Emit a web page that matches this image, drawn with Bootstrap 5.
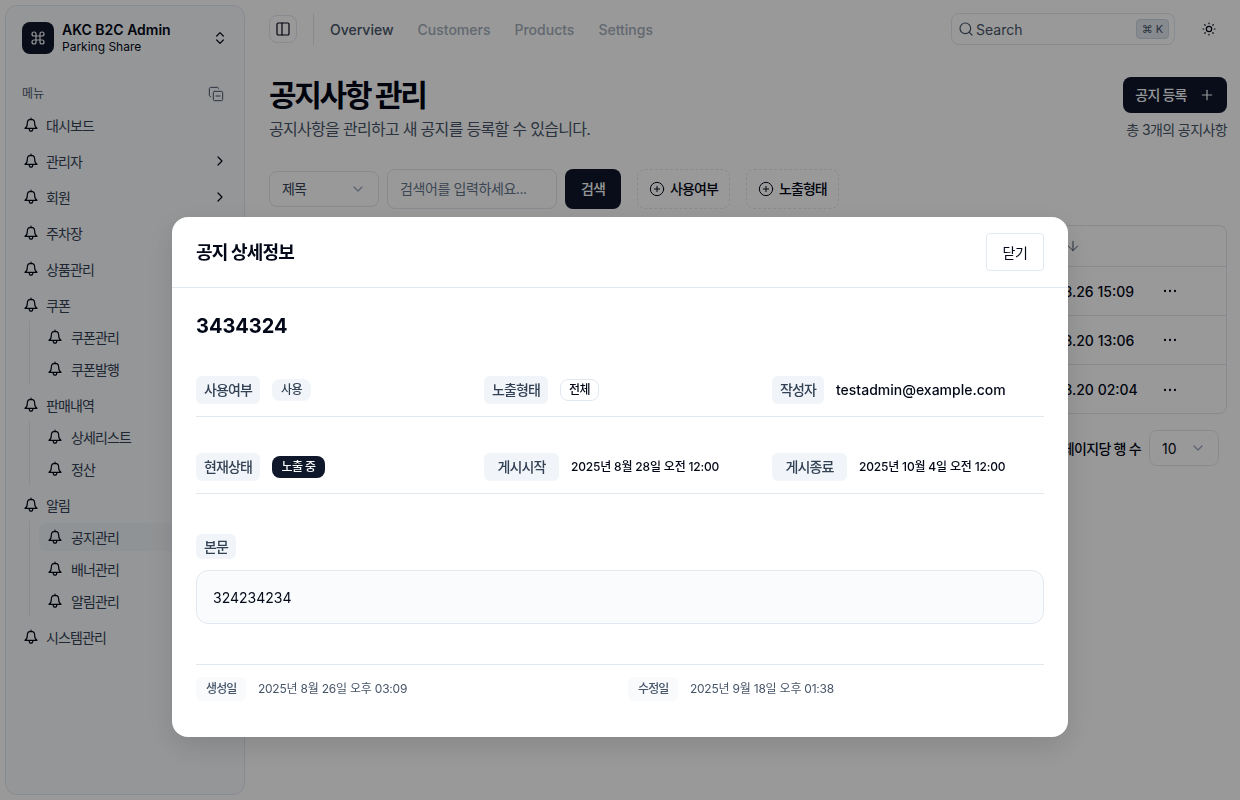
<!doctype html>
<html lang="ko">
<head>
<meta charset="utf-8">
<title>공지사항 관리</title>
<link href="https://cdn.jsdelivr.net/npm/bootstrap@5.3.0/dist/css/bootstrap.min.css" rel="stylesheet">
<style>
body{font-family:Inter,"Noto Sans CJK KR",sans-serif;font-size:14px;color:#020817;background:#fff;height:800px;overflow:hidden}
.ico{width:16px;height:16px;fill:none;stroke:currentColor;stroke-width:1.8;stroke-linecap:round;stroke-linejoin:round;flex:none}
.ico.thin{stroke-width:1.5}
.ico.faint{color:#94a3b8}
.up1{margin-bottom:2px}
.side{width:240px;height:790px;margin:5px 0 5px 5px;background:#f8fafc;border:1px solid #e2e8f0;border-radius:12px;padding:16px;flex:none}
.logo{width:32px;height:32px;border-radius:8px;background:#0f172a;color:#f8fafc}
.org{height:32px;line-height:16px}
.org b{font-size:14px;font-weight:600}
.org span{font-size:12px;margin-top:1px}
.seclabel{height:31px;margin-top:24px;font-size:12px;color:#475569;margin-right:4px}
.menu-a,.menu-s{display:flex;align-items:center;color:#334155;text-decoration:none;letter-spacing:-.9px}
.menu-a .ico,.menu-s .ico{color:#020817}
.menu-a{height:32px;gap:7px;margin-top:4px;margin-left:1px}
.menu-a:first-child{margin-top:0}
.subl{margin:0 0 0 7px;border-left:1px solid #e2e8f0;padding:2px 0 2px 9px;display:flex;flex-direction:column;gap:4px}
.menu-s{height:28px;gap:8px;padding-left:8px;border-radius:6px}
.menu-s.on{background:#f1f5f9}
.mainp{flex:1;min-width:0;padding:0 13px 0 24px}
.topb{height:58px}
.tog{width:28px;height:28px;border:1px solid #e2e8f0;border-radius:8px;color:#020817}
.vr1{width:1px;height:32px;background:#e2e8f0;margin:0 16px}
.tlink{color:#a3adba;font-weight:500;text-decoration:none;margin-right:24px}
.tlink.on{color:#475569}
.srch{width:224px;height:32px;border:1px solid #e2e8f0;border-radius:8px;padding:0 5px 0 6px;color:#475569;margin-right:26px;gap:2px}
.kb{font-size:11px;background:#e2e8f0;border:1px solid #cbd5e1;border-radius:4px;width:33px;height:20px;color:#475569}
.sunb{color:#020817;margin-right:10px}
.headr{margin-top:19px}
h1.ttl{font-size:30px;font-weight:700;letter-spacing:-2.3px;line-height:36px;margin:0}
.subt{font-size:16px;color:#475569;line-height:24px;margin-top:4px;letter-spacing:-.7px}
.dkbtn{background:#0f172a;color:#f8fafc;border:0;border-radius:8px;font-size:14px;font-weight:500;height:36px;width:104px;letter-spacing:-.8px}
.dkbtn:hover{background:#0f172a;color:#f8fafc}
.addb{gap:12px}
.cnt{color:#475569;line-height:20px;margin-top:7px;letter-spacing:-.6px}
.filt{margin-top:28px;height:40px}
.fsel{width:110px;height:36px;border:1px solid #e2e8f0;border-radius:8px;padding:0 12px;color:#334155;letter-spacing:-1px}
.finp{width:170px;height:40px;border:1px solid #e2e8f0;border-radius:8px;padding:0 12px;color:#64748b;background:#fff;letter-spacing:-.4px}
.fbtn{width:56px;height:40px}
.dash{height:40px;border:1px dashed #e2e8f0;border-radius:8px;font-weight:500;padding:0 11px;color:#020817;gap:5px;letter-spacing:-.9px}
.tblw{margin-top:16px;border:1px solid #e2e8f0;border-radius:8px;height:189px;overflow:hidden}
.thr{height:41px;border-bottom:1px solid #e2e8f0;padding-left:795px;color:#475569}
.tr1{height:49px;border-bottom:1px solid #e2e8f0;padding-left:746px;font-weight:500}
.tr1:last-child{border-bottom:0}
.tr1 span{width:146px}
.pager{margin-top:16px;padding-right:8px;letter-spacing:-.7px}
.psel{width:70px;height:36px;border:1px solid #e2e8f0;border-radius:8px;padding:0 12px;letter-spacing:0}
.modal-backdrop.show.scrim{background:#000;opacity:.4}
.dlg{position:fixed;left:172px;top:217px;width:896px;z-index:1060}
.dlg .modal-content{background:#fff;border:0;border-radius:16px;height:520px;overflow:hidden;box-shadow:0 10px 30px rgba(0,0,0,.12)}
.dlg .modal-header{height:71px;padding:0 24px;border-bottom:1px solid #e2e8f0}
.dlg .modal-title{font-size:18px;font-weight:600;letter-spacing:-.85px;color:#020817}
.clsb{width:58px;height:38px;border:1px solid #e2e8f0;border-radius:4px;font-size:14px;padding:0;color:#020817;letter-spacing:-.5px}
.dlg .modal-body{padding:24px}
.numt{font-size:20px;font-weight:700;line-height:28px;margin:0 0 36px 0;color:#020817}
.infg{display:grid;grid-template-columns:repeat(3,272px);gap:16px;padding-bottom:12px;border-bottom:1px solid #e2e8f0;margin-bottom:36px}
.lbl{background:#f1f5f9;color:#334155;border-radius:6px;font-weight:500;height:28px;padding:0 8px;line-height:28px;flex:none;letter-spacing:-.9px}
.wd-64{min-width:64px;text-align:center}
.wd-75{min-width:75px;text-align:center}
.pill{font-size:12px;height:22px;line-height:20px;padding:0 8px;border-radius:8px;border:1px solid transparent;font-weight:500;letter-spacing:-.6px}
.pill.sec{background:#f1f5f9;color:#334155}
.pill.out{border-color:#e2e8f0}
.pill.dk{background:#0f172a;color:#f8fafc;padding:0 8.5px}
.val1{font-weight:500;padding-bottom:2px}
.val2{font-size:12px;font-weight:500;letter-spacing:-.18px}
.bonl{height:25px;line-height:25px;padding:0 8px;display:inline-block;margin-top:4px}
.bonb{height:54px;background:#fafbfd;border:1px solid #e2e8f0;border-radius:12px;padding:0 16px;margin-top:11px}
.foot{margin-top:40px;border-top:1px solid #e2e8f0;padding-top:12px;display:grid;grid-template-columns:repeat(2,416px);gap:16px}
.mlb{background:#f8fafc;color:#475569;font-size:12px;font-weight:500;border-radius:6px;height:24px;line-height:24px;padding:0 9.5px 0 10px;letter-spacing:-.9px}
.mv{font-size:12px;color:#475569;letter-spacing:-.22px}
</style>
</head>
<body>
<svg width="0" height="0" class="d-none">
<symbol id="bell" viewBox="0 0 24 24"><path d="M12 1.500v2"/><path d="M12 3.500c-3.300 0-5.500 2.500-5.500 5.800 0 4-.9 6.200-3.500 7.700h18c-2.600-1.500-3.500-3.700-3.500-7.700 0-3.300-2.200-5.800-5.500-5.800z"/><path d="M9.300 17.500c0 2.200 1.100 3.800 2.700 3.800s2.700-1.600 2.700-3.800"/></symbol>
<symbol id="chr" viewBox="0 0 24 24"><path d="m9 18 6-6-6-6"/></symbol>
<symbol id="chd" viewBox="0 0 24 24"><path d="m6 9 6 6 6-6"/></symbol>
<symbol id="cud" viewBox="0 0 24 24"><path d="m7 15 5 5 5-5"/><path d="m7 9 5-5 5 5"/></symbol>
<symbol id="cmd" viewBox="0 0 24 24"><path d="M15 6v12a3 3 0 1 0 3-3H6a3 3 0 1 0 3 3V6a3 3 0 1 0-3 3h12a3 3 0 1 0-3-3"/></symbol>
<symbol id="cpm" viewBox="0 0 24 24"><line x1="12" x2="18" y1="15" y2="15"/><rect width="14" height="14" x="8" y="8" rx="2"/><path d="M4 16c-1.100 0-2-.9-2-2V4c0-1.100.9-2 2-2h10c1.100 0 2 .9 2 2"/></symbol>
<symbol id="pnl" viewBox="0 0 24 24"><rect width="18" height="18" x="3" y="3" rx="2"/><path d="M10.500 3v18"/></symbol>
<symbol id="sch" viewBox="0 0 24 24"><circle cx="11" cy="11" r="8"/><path d="m21 21-4.300-4.300"/></symbol>
<symbol id="sun" viewBox="0 0 24 24"><circle cx="12" cy="12" r="4"/><path d="M12 3v1M12 20v1M3 12h1M20 12h1M18.364 5.636l-.707.707M6.343 17.657l-.707.707M5.636 5.636l.707.707M17.657 17.657l.707.707"/></symbol>
<symbol id="pls" viewBox="0 0 24 24"><path d="M5 12h14"/><path d="M12 5v14"/></symbol>
<symbol id="cpl" viewBox="0 0 24 24"><circle cx="12" cy="12" r="10"/><path d="M8 12h8"/><path d="M12 8v8"/></symbol>
<symbol id="ard" viewBox="0 0 24 24"><path d="M12 5v14"/><path d="m19 12-7 7-7-7"/></symbol>
<symbol id="ell" viewBox="0 0 24 24"><circle cx="12" cy="12" r=".8"/><circle cx="19.500" cy="12" r=".8"/><circle cx="4.500" cy="12" r=".8"/></symbol>
</svg>

<div class="d-flex">
  <aside class="side">
    <div class="d-flex align-items-center gap-2 org">
      <div class="logo d-flex align-items-center justify-content-center"><svg class="ico"><use href="#cmd"/></svg></div>
      <div class="d-flex flex-column flex-grow-1"><b>AKC B2C Admin</b><span>Parking Share</span></div>
      <svg class="ico"><use href="#cud"/></svg>
    </div>
    <div class="seclabel d-flex align-items-center justify-content-between"><span>메뉴</span><svg class="ico thin"><use href="#cpm"/></svg></div>
    <nav>
      <a class="menu-a" href="#"><svg class="ico"><use href="#bell"/></svg>대시보드</a>
      <a class="menu-a" href="#"><svg class="ico"><use href="#bell"/></svg>관리자<svg class="ico ms-auto"><use href="#chr"/></svg></a>
      <a class="menu-a" href="#"><svg class="ico"><use href="#bell"/></svg>회원<svg class="ico ms-auto"><use href="#chr"/></svg></a>
      <a class="menu-a" href="#"><svg class="ico"><use href="#bell"/></svg>주차장</a>
      <a class="menu-a" href="#"><svg class="ico"><use href="#bell"/></svg>상품관리</a>
      <a class="menu-a" href="#"><svg class="ico"><use href="#bell"/></svg>쿠폰</a>
      <div class="subl"><a class="menu-s" href="#"><svg class="ico"><use href="#bell"/></svg>쿠폰관리</a><a class="menu-s" href="#"><svg class="ico"><use href="#bell"/></svg>쿠폰발행</a></div>
      <a class="menu-a" href="#"><svg class="ico"><use href="#bell"/></svg>판매내역</a>
      <div class="subl"><a class="menu-s" href="#"><svg class="ico"><use href="#bell"/></svg>상세리스트</a><a class="menu-s" href="#"><svg class="ico"><use href="#bell"/></svg>정산</a></div>
      <a class="menu-a" href="#"><svg class="ico"><use href="#bell"/></svg>알림</a>
      <div class="subl"><a class="menu-s on" href="#"><svg class="ico"><use href="#bell"/></svg>공지관리</a><a class="menu-s" href="#"><svg class="ico"><use href="#bell"/></svg>배너관리</a><a class="menu-s" href="#"><svg class="ico"><use href="#bell"/></svg>알림관리</a></div>
      <a class="menu-a" href="#"><svg class="ico"><use href="#bell"/></svg>시스템관리</a>
    </nav>
  </aside>

  <main class="mainp">
    <div class="topb d-flex align-items-center">
      <div class="tog d-flex align-items-center justify-content-center"><svg class="ico"><use href="#pnl"/></svg></div>
      <div class="vr1"></div>
      <a class="tlink on" href="#">Overview</a><a class="tlink" href="#">Customers</a><a class="tlink" href="#">Products</a><a class="tlink" href="#">Settings</a>
      <div class="srch d-flex align-items-center ms-auto"><svg class="ico"><use href="#sch"/></svg><span class="flex-grow-1">Search</span><span class="kb d-flex align-items-center justify-content-center">⌘ K</span></div>
      <svg class="ico sunb"><use href="#sun"/></svg>
    </div>
    <div class="headr d-flex justify-content-between">
      <div><h1 class="ttl">공지사항 관리</h1><div class="subt">공지사항을 관리하고 새 공지를 등록할 수 있습니다.</div></div>
      <div class="d-flex flex-column align-items-end"><button class="btn dkbtn addb d-flex align-items-center justify-content-center p-0"><span class="up1">공지 등록</span><svg class="ico"><use href="#pls"/></svg></button><div class="cnt">총 3개의 공지사항</div></div>
    </div>
    <div class="filt d-flex align-items-center gap-2">
      <div class="fsel d-flex align-items-center justify-content-between"><span class="up1">제목</span><svg class="ico faint"><use href="#chd"/></svg></div>
      <div class="finp d-flex align-items-center"><span class="up1">검색어를 입력하세요...</span></div>
      <button class="btn dkbtn fbtn d-flex align-items-center justify-content-center p-0"><span class="up1">검색</span></button>
      <div class="dash d-flex align-items-center ms-2"><svg class="ico thin"><use href="#cpl"/></svg><span class="up1">사용여부</span></div>
      <div class="dash d-flex align-items-center ms-2"><svg class="ico thin"><use href="#cpl"/></svg><span class="up1">노출형태</span></div>
    </div>
    <div class="tblw">
      <div class="thr d-flex align-items-center"><svg class="ico thin"><use href="#ard"/></svg></div>
      <div class="tr1 d-flex align-items-center"><span>2025.08.26 15:09</span><svg class="ico"><use href="#ell"/></svg></div>
      <div class="tr1 d-flex align-items-center"><span>2025.08.20 13:06</span><svg class="ico"><use href="#ell"/></svg></div>
      <div class="tr1 d-flex align-items-center"><span>2025.08.20 02:04</span><svg class="ico"><use href="#ell"/></svg></div>
    </div>
    <div class="pager d-flex justify-content-end align-items-center gap-2 fw-medium">페이지당 행 수<div class="psel d-flex align-items-center justify-content-between fw-normal">10<svg class="ico faint"><use href="#chd"/></svg></div></div>
  </main>
</div>

<div class="modal-backdrop show scrim"></div>
<div class="dlg">
  <div class="modal-content">
    <div class="modal-header"><h2 class="modal-title">공지 상세정보</h2><button class="btn clsb ms-auto">닫기</button></div>
    <div class="modal-body">
      <h3 class="numt">3434324</h3>
      <div class="infg">
        <div class="d-flex align-items-center gap-2"><span class="lbl wd-64">사용여부</span><span class="pill sec ms-1">사용</span></div>
        <div class="d-flex align-items-center gap-2"><span class="lbl wd-64">노출형태</span><span class="pill out ms-1">전체</span></div>
        <div class="d-flex align-items-center gap-2"><span class="lbl">작성자</span><span class="val1 ms-1">testadmin@example.com</span></div>
      </div>
      <div class="infg">
        <div class="d-flex align-items-center gap-2"><span class="lbl wd-64">현재상태</span><span class="pill dk ms-1">노출 중</span></div>
        <div class="d-flex align-items-center gap-2"><span class="lbl wd-75">게시시작</span><span class="val2 ms-1">2025년 8월 28일 오전 12:00</span></div>
        <div class="d-flex align-items-center gap-2"><span class="lbl wd-75">게시종료</span><span class="val2 ms-1">2025년 10월 4일 오전 12:00</span></div>
      </div>
      <span class="lbl bonl">본문</span>
      <div class="bonb d-flex align-items-center">324234234</div>
      <div class="foot">
        <div class="d-flex align-items-center gap-2"><span class="mlb">생성일</span><span class="mv ms-1">2025년 8월 26일 오후 03:09</span></div>
        <div class="d-flex align-items-center gap-2"><span class="mlb">수정일</span><span class="mv ms-1">2025년 9월 18일 오후 01:38</span></div>
      </div>
    </div>
  </div>
</div>
<script src="https://cdn.jsdelivr.net/npm/bootstrap@5.3.0/dist/js/bootstrap.bundle.min.js"></script>
</body>
</html>
